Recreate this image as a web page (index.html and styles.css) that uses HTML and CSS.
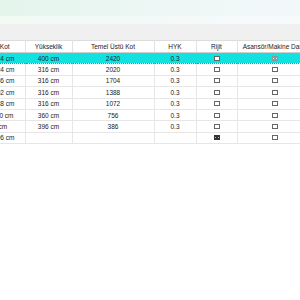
FILE: index.html
```html
<html>
<head>
<meta name="viewport" content="width=device-width, initial-scale=1">
<title>Kat Bilgileri</title>
<link rel="stylesheet" href="styles.css">
</head>
<body>
<div class="titlebar"></div>
<div class="strip"></div>
<div class="toolbar"></div>
<div class="grid-wrap">
	<table class="grid">
		<colgroup>
			<col class="c-kot">
			<col class="c-yuk">
			<col class="c-temel">
			<col class="c-hyk">
			<col class="c-rijit">
			<col class="c-asan">
		</colgroup>
		<thead>
			<tr>
				<th>Kot</th>
				<th>Yükseklik</th>
				<th>Temel Üstü Kot</th>
				<th>HYK</th>
				<th>Rijit</th>
				<th>Asansör/Makine Dairesi</th>
			</tr>
		</thead>
		<tbody>
			<tr class="selected">
				<td class="left">2824 cm</td><td>400 cm</td><td>2420</td><td>0.3</td>
				<td><span class="cb"></span></td><td><span class="cb grey"></span></td>
			</tr>
			<tr>
				<td class="left">2424 cm</td><td>316 cm</td><td>2020</td><td>0.3</td>
				<td><span class="cb"></span></td><td><span class="cb"></span></td>
			</tr>
			<tr>
				<td class="left">2036 cm</td><td>316 cm</td><td>1704</td><td>0.3</td>
				<td><span class="cb"></span></td><td><span class="cb"></span></td>
			</tr>
			<tr>
				<td class="left">1702 cm</td><td>316 cm</td><td>1388</td><td>0.3</td>
				<td><span class="cb"></span></td><td><span class="cb"></span></td>
			</tr>
			<tr>
				<td class="left">1388 cm</td><td>316 cm</td><td>1072</td><td>0.3</td>
				<td><span class="cb"></span></td><td><span class="cb"></span></td>
			</tr>
			<tr>
				<td class="left">1110 cm</td><td>360 cm</td><td>756</td><td>0.3</td>
				<td><span class="cb"></span></td><td><span class="cb"></span></td>
			</tr>
			<tr>
				<td class="left">36 cm</td><td>396 cm</td><td>386</td><td>0.3</td>
				<td><span class="cb"></span></td><td><span class="cb"></span></td>
			</tr>
			<tr>
				<td class="left">1096 cm</td><td></td><td></td><td></td>
				<td><span class="cb dark"></span></td><td><span class="cb"></span></td>
			</tr>
		</tbody>
	</table>
</div>
</body>
</html>
```
FILE: styles.css
```css
body {
margin: 0;
background: white;
font-family: "Liberation Sans", Arial, sans-serif;
color: #222;
width: 300px;
height: 300px;
overflow: hidden;
}

.titlebar {
height: 16px;
background: linear-gradient(to right, #e4f5ec, #eef7f6 60%, #f2f8fa);
}

.strip {
height: 8px;
background: linear-gradient(to right, #f1f9f5, #f6fafb);
}

.toolbar {
height: 16px;
background: #f0f0f0;
}

.grid-wrap {
width: 300px;
overflow: hidden;
}

.grid {
margin-left: -15px;
width: 328px;
table-layout: fixed;
border-collapse: collapse;
font-size: 6.5px;
}

.c-kot { width: 40px; }
.c-yuk { width: 47px; }
.c-temel { width: 82px; }
.c-hyk { width: 42px; }
.c-rijit { width: 41px; }
.c-asan { width: 76px; }

.grid thead tr {
height: 12px;
}

.grid tbody tr {
height: 11.4px;
}

.grid th {
font-weight: normal;
text-align: center;
white-space: nowrap;
overflow: hidden;
background: white;
border-top: 1px solid #dcdcdc;
border-bottom: 1px solid #cfcfcf;
border-right: 1px solid #e2e2e2;
padding: 0;
}

.grid th:last-child {
padding-left: 4px;
}

.grid td {
padding: 0;
text-align: center;
white-space: nowrap;
overflow: hidden;
border-bottom: 1px solid #e6e6e6;
border-right: 1px solid #e6e6e6;
}

.grid td.left {
text-align: left;
padding-left: 4.5px;
}

.grid tr.selected td {
background: #12e2df;
border-bottom: 1px dotted #5a8c8a;
border-right: 1px solid #12e2df;
}

.cb {
display: inline-block;
width: 4px;
height: 3px;
border: 1px solid #666;
background: white;
vertical-align: middle;
}

.cb.grey {
border-color: #8a9a9a;
background:
  linear-gradient(45deg, transparent 40%, #8a9a9a 40%, #8a9a9a 60%, transparent 60%),
  linear-gradient(-45deg, transparent 40%, #8a9a9a 40%, #8a9a9a 60%, transparent 60%),
  #d8efee;
}

.cb.dark {
border-color: #333;
background:
  linear-gradient(45deg, transparent 40%, #333 40%, #333 60%, transparent 60%),
  linear-gradient(-45deg, transparent 40%, #333 40%, #333 60%, transparent 60%),
  #bbb;
}
```
